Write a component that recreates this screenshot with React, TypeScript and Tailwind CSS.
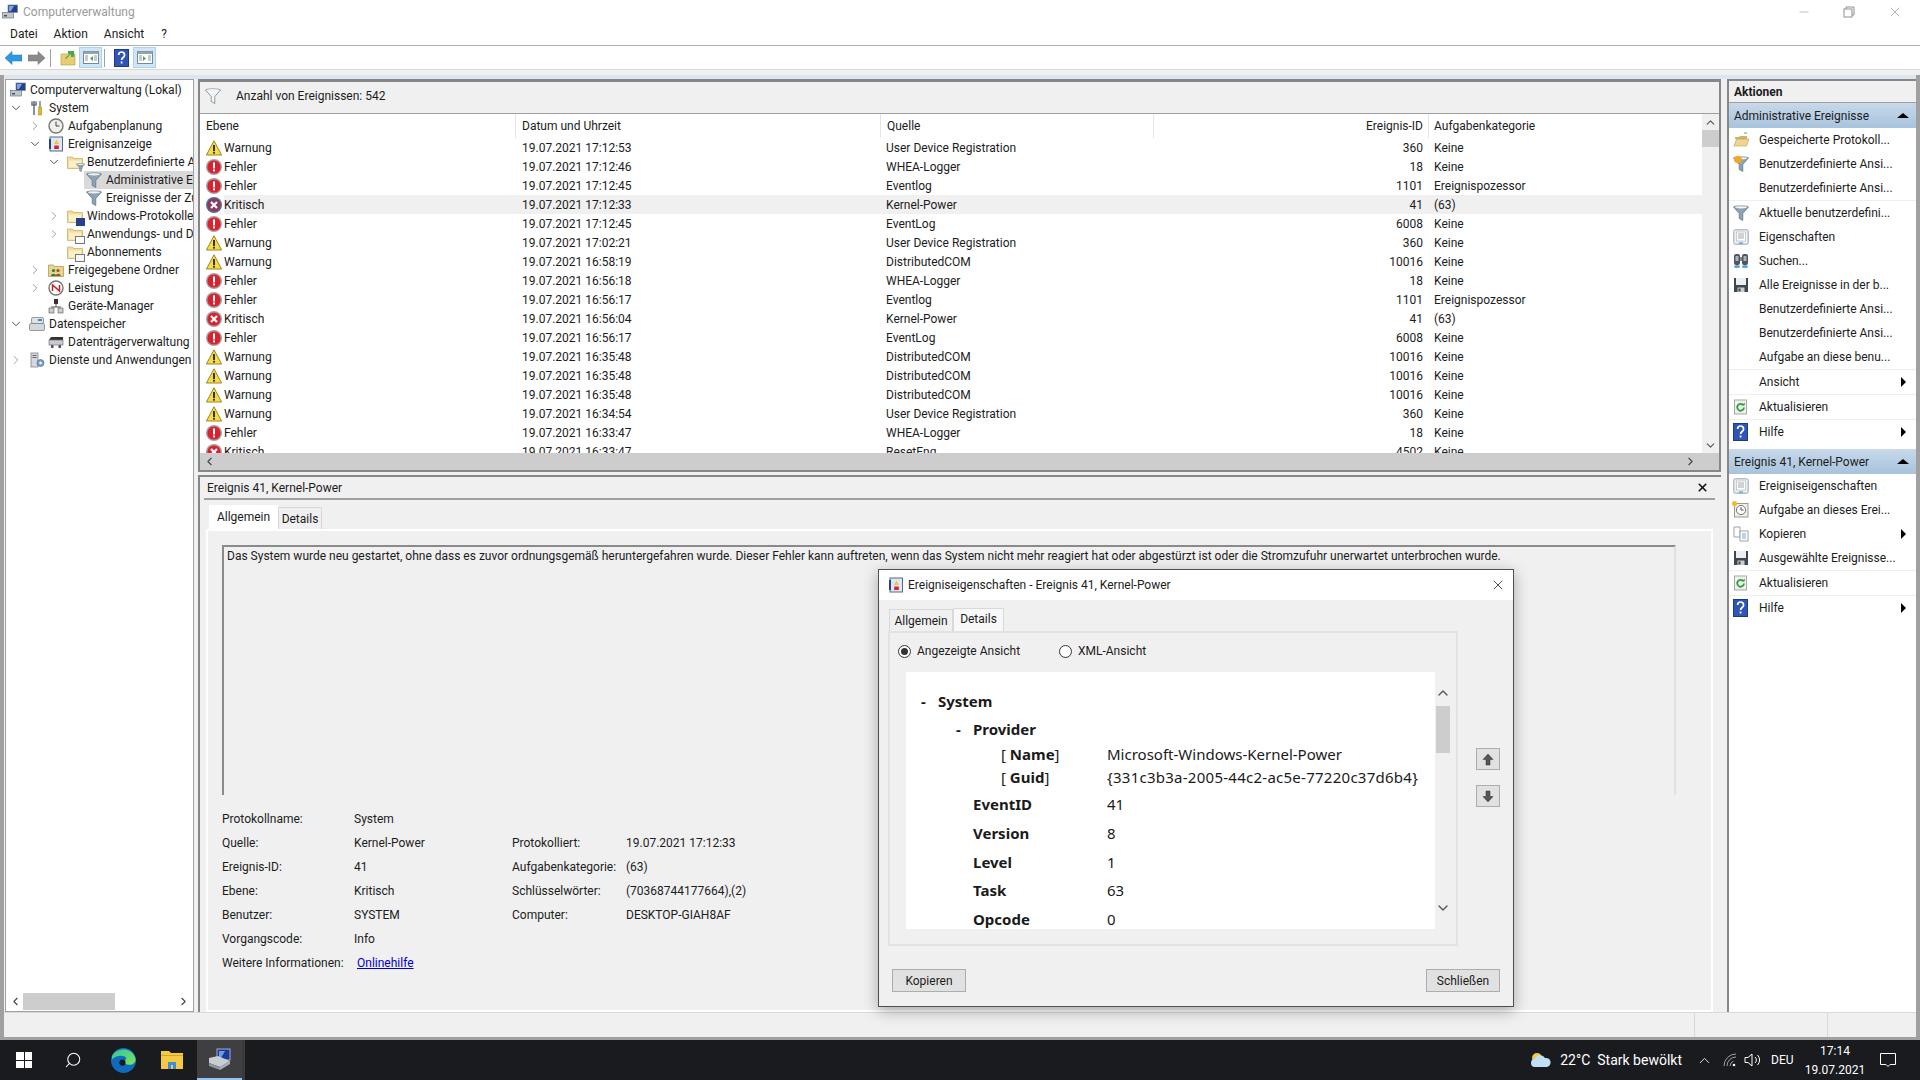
import { ChevronDown, ChevronRight, ChevronUp, ChevronLeft, X, Minus, Search } from "lucide-react";
import type { ReactNode } from "react";

type Level = "Warnung" | "Fehler" | "Kritisch";

const rows: { level: Level; time: string; source: string; id: string; cat: string; hl?: boolean }[] = [
  { level: "Warnung", time: "17:12:53", source: "User Device Registration", id: "360", cat: "Keine" },
  { level: "Fehler", time: "17:12:46", source: "WHEA-Logger", id: "18", cat: "Keine" },
  { level: "Fehler", time: "17:12:45", source: "Eventlog", id: "1101", cat: "Ereignispozessor" },
  { level: "Kritisch", time: "17:12:33", source: "Kernel-Power", id: "41", cat: "(63)", hl: true },
  { level: "Fehler", time: "17:12:45", source: "EventLog", id: "6008", cat: "Keine" },
  { level: "Warnung", time: "17:02:21", source: "User Device Registration", id: "360", cat: "Keine" },
  { level: "Warnung", time: "16:58:19", source: "DistributedCOM", id: "10016", cat: "Keine" },
  { level: "Fehler", time: "16:56:18", source: "WHEA-Logger", id: "18", cat: "Keine" },
  { level: "Fehler", time: "16:56:17", source: "Eventlog", id: "1101", cat: "Ereignispozessor" },
  { level: "Kritisch", time: "16:56:04", source: "Kernel-Power", id: "41", cat: "(63)" },
  { level: "Fehler", time: "16:56:17", source: "EventLog", id: "6008", cat: "Keine" },
  { level: "Warnung", time: "16:35:48", source: "DistributedCOM", id: "10016", cat: "Keine" },
  { level: "Warnung", time: "16:35:48", source: "DistributedCOM", id: "10016", cat: "Keine" },
  { level: "Warnung", time: "16:35:48", source: "DistributedCOM", id: "10016", cat: "Keine" },
  { level: "Warnung", time: "16:34:54", source: "User Device Registration", id: "360", cat: "Keine" },
  { level: "Fehler", time: "16:33:47", source: "WHEA-Logger", id: "18", cat: "Keine" },
  { level: "Kritisch", time: "16:33:47", source: "ResetEng", id: "4502", cat: "Keine" },
];

const Warn = () => (
  <svg width="16" height="16" viewBox="0 0 16 16">
    <path d="M8 .8 15.600 15H.4Z" fill="#f7dc45" stroke="#8f7d18" strokeWidth=".9" />
    <rect x="7.100" y="5" width="1.800" height="6" fill="#222" />
    <rect x="7.100" y="11.800" width="1.800" height="1.800" fill="#222" />
  </svg>
);

const ErrorDot = () => (
  <svg width="16" height="16" viewBox="0 0 16 16">
    <circle cx="8" cy="8" r="8" fill="#a5a0a4" />
    <circle cx="8" cy="8" r="6.600" fill="#d8232e" />
    <rect x="7" y="3.400" width="2" height="6" fill="#fff" />
    <rect x="7" y="10.400" width="2" height="2" fill="#fff" />
  </svg>
);

const Critical = ({ selected }: { selected?: boolean }) => (
  <svg width="16" height="16" viewBox="0 0 16 16">
    <circle cx="8" cy="8" r="8" fill={selected ? "#5a6a9a" : "#a5a0a4"} />
    <circle cx="8" cy="8" r="6.600" fill={selected ? "#8a3a5c" : "#d8232e"} />
    <path d="M5 5l6 6M11 5l-6 6" stroke="#fff" strokeWidth="2.200" />
  </svg>
);

const Funnel = ({ color = "#8aa4b5", size = 16 }: { color?: string; size?: number }) => (
  <svg width={size} height={size} viewBox="0 0 16 16">
    <path d="M.5 2C.5.6 15.500.6 15.500 2L9.800 8.500V15.500L6.200 13.500V8.500Z" fill={color} stroke="#5b7383" strokeWidth=".7" />
    <ellipse cx="8" cy="2.300" rx="6" ry="1.100" fill="#f2f5f7" />
  </svg>
);

const FolderIcon = ({ badge }: { badge?: ReactNode }) => (
  <span className="relative inline-flex h-4 w-4">
    <svg width="16" height="16" viewBox="0 0 16 16">
      <path d="M.5 3h5l1 1.500h9v10H.5Z" fill="#f3dc9b" stroke="#c9a95a" strokeWidth=".7" />
      <path d="M2 6.500h12v7H2Z" fill="#fbf0c8" />
    </svg>
    {badge && <span className="absolute -bottom-[2px] -right-[2px]">{badge}</span>}
  </span>
);

const ComputerIcon = () => (
  <svg width="16" height="16" viewBox="0 0 16 16">
    <rect x="6" y="1" width="9.500" height="7.500" fill="#24408f" stroke="#7d8a99" strokeWidth=".7" />
    <path d="M7 2h5l-3 5H7Z" fill="#7ea4dd" />
    <rect x=".5" y="8.500" width="11" height="5.500" fill="#bfc5cc" stroke="#6f7880" strokeWidth=".7" />
    <rect x="2" y="11" width="3" height="1.500" fill="#4a5058" />
  </svg>
);

const ToolsIcon = () => (
  <svg width="16" height="16" viewBox="0 0 16 16">
    <path d="M5 1v4M3 1.500v3.500h4V1.500M5 5v10" stroke="#6b7680" strokeWidth="1.600" fill="none" />
    <path d="M11 1v6" stroke="#8a8f96" strokeWidth="1.600" />
    <rect x="9.700" y="7" width="2.800" height="8" fill="#e8b422" stroke="#a67c12" strokeWidth=".5" />
  </svg>
);

const ClockIcon = () => (
  <svg width="16" height="16" viewBox="0 0 16 16">
    <circle cx="8" cy="8" r="7" fill="#eef0ee" stroke="#77776f" strokeWidth="1.400" />
    <path d="M8 3.500V8h3.500" stroke="#444" strokeWidth="1" fill="none" />
  </svg>
);

const LogIcon = () => (
  <svg width="16" height="16" viewBox="0 0 16 16">
    <rect x="2" y="1" width="12.500" height="14" fill="#dfe6f0" stroke="#4e6a91" strokeWidth="1" />
    <path d="M2 3v10" stroke="#24408f" strokeWidth="2" />
    <path d="M8.500 3.500 11 8H6Z" fill="#f0c33c" />
    <rect x="6.200" y="9.500" width="4.600" height="3.500" fill="#d8232e" />
  </svg>
);

const SharedIcon = () => (
  <svg width="16" height="16" viewBox="0 0 16 16">
    <path d="M.5 3h5l1 1.500h9v10H.5Z" fill="#e9d490" stroke="#a88f4a" strokeWidth=".7" />
    <circle cx="5.500" cy="8.500" r="1.600" fill="#2f7d4a" />
    <path d="M3 14c0-3 5-3 5 0Z" fill="#2f7d4a" />
    <circle cx="10" cy="8.500" r="1.600" fill="#9a5a20" />
    <path d="M7.800 14c0-3 5-3 5 0Z" fill="#9a5a20" />
  </svg>
);

const PerfIcon = () => (
  <svg width="16" height="16" viewBox="0 0 16 16">
    <circle cx="8" cy="8" r="7" fill="#fff" stroke="#77776f" strokeWidth="1.400" />
    <path d="M4.500 11V5l7 6V5" stroke="#c8202a" strokeWidth="1.500" fill="none" />
  </svg>
);

const DeviceIcon = () => (
  <svg width="16" height="16" viewBox="0 0 16 16">
    <rect x="6" y="1" width="4" height="5" fill="#333" />
    <path d="M8 6v3M3 9h10" stroke="#555" />
    <rect x="1" y="10" width="5" height="5" fill="#c9ccd0" stroke="#555" strokeWidth=".6" />
    <rect x="10" y="10" width="5" height="5" fill="#c9ccd0" stroke="#555" strokeWidth=".6" />
  </svg>
);

const StorageIcon = () => (
  <svg width="16" height="16" viewBox="0 0 16 16">
    <rect x=".5" y="7.500" width="15" height="7" rx="1.500" fill="#d4d8dc" stroke="#6f7880" strokeWidth=".7" />
    <rect x="2.500" y="1.500" width="12" height="6" rx="1.500" fill="#dfe3e6" stroke="#6f7880" strokeWidth=".7" />
    <rect x="9" y="3" width="4" height="2" fill="#2b8fc7" />
  </svg>
);

const DiskIcon = () => (
  <svg width="16" height="16" viewBox="0 0 16 16">
    <path d="M3 3h12v3H1Z" fill="#333" />
    <rect x="1" y="6" width="14" height="5" fill="#c7cbd0" stroke="#666" strokeWidth=".6" />
    <rect x="3" y="11" width="2.500" height="3" fill="#555" />
    <rect x="10.500" y="11" width="2.500" height="3" fill="#555" />
  </svg>
);

const ServiceIcon = () => (
  <svg width="16" height="16" viewBox="0 0 16 16">
    <rect x="2" y="1" width="7" height="14" fill="#d5d9de" stroke="#6f7880" strokeWidth=".7" />
    <path d="M3.500 3.500h4M3.500 5.500h4" stroke="#666" />
    <circle cx="11.500" cy="11" r="3.400" fill="#7fa6cf" stroke="#4a6f96" strokeWidth=".8" />
    <circle cx="11.500" cy="11" r="1.200" fill="#fff" />
  </svg>
);

const tree: { label: string; depth: number; arrow?: "open" | "closed"; icon: ReactNode; sel?: boolean }[] = [
  { label: "Computerverwaltung (Lokal)", depth: 0, icon: <ComputerIcon /> },
  { label: "System", depth: 1, arrow: "open", icon: <ToolsIcon /> },
  { label: "Aufgabenplanung", depth: 2, arrow: "closed", icon: <ClockIcon /> },
  { label: "Ereignisanzeige", depth: 2, arrow: "open", icon: <LogIcon /> },
  { label: "Benutzerdefinierte Ansichten", depth: 3, arrow: "open", icon: <FolderIcon badge={<Funnel size={9} />} /> },
  { label: "Administrative Ereignisse", depth: 4, icon: <Funnel />, sel: true },
  { label: "Ereignisse der Zusammenfassung", depth: 4, icon: <Funnel /> },
  { label: "Windows-Protokolle", depth: 3, arrow: "closed", icon: <FolderIcon badge={<span className="block h-[8px] w-[9px] bg-[#24408f]" />} /> },
  { label: "Anwendungs- und Dienstprotokolle", depth: 3, arrow: "closed", icon: <FolderIcon badge={<span className="block h-[8px] w-[10px] border border-[#777] bg-white" />} /> },
  { label: "Abonnements", depth: 3, icon: <FolderIcon badge={<span className="block h-[8px] w-[10px] border border-[#777] bg-[#f4f6fa]" />} /> },
  { label: "Freigegebene Ordner", depth: 2, arrow: "closed", icon: <SharedIcon /> },
  { label: "Leistung", depth: 2, arrow: "closed", icon: <PerfIcon /> },
  { label: "Geräte-Manager", depth: 2, icon: <DeviceIcon /> },
  { label: "Datenspeicher", depth: 1, arrow: "open", icon: <StorageIcon /> },
  { label: "Datenträgerverwaltung", depth: 2, icon: <DiskIcon /> },
  { label: "Dienste und Anwendungen", depth: 1, arrow: "closed", icon: <ServiceIcon /> },
];

const HelpIcon = () => (
  <svg width="15" height="18" viewBox="0 0 15 18">
    <rect x=".5" y=".5" width="14" height="17" fill="#2f55b5" stroke="#1c3a86" />
    <path d="M4.600 6c0-4 6-4 6 0 0 2.600-3 2.400-3 5M7.600 12.600v2" stroke="#fff" strokeWidth="1.700" fill="none" />
  </svg>
);

const RefreshIcon = () => (
  <svg width="16" height="16" viewBox="0 0 16 16">
    <rect x="1.500" y="1" width="12" height="14" fill="#eef2ea" stroke="#a4a9a2" />
    <path d="M11 8.500a3.400 3.400 0 1 1-1-2.600" stroke="#2f9c3f" strokeWidth="1.800" fill="none" />
    <path d="M8.500 6.600h3.200V3.600Z" fill="#2f9c3f" />
  </svg>
);

const PropsIcon = () => (
  <svg width="16" height="16" viewBox="0 0 16 16">
    <rect x=".8" y=".8" width="14.400" height="14.400" rx="1.500" fill="#eef1f4" stroke="#9aa3ad" />
    <rect x="3.500" y="3" width="9" height="9" fill="#fff" stroke="#aab2ba" strokeWidth=".6" />
    <path d="M5 5h6M5 7h6M5 9h6" stroke="#8a929b" strokeWidth=".8" />
    <rect x="6" y="13.400" width="4" height="1.400" fill="#57a5dd" />
  </svg>
);

const Floppy = () => (
  <svg width="16" height="16" viewBox="0 0 16 16">
    <path d="M1 1h14v14H1Z" fill="#40464d" />
    <rect x="3" y="1" width="10" height="7" fill="#eceff2" />
    <rect x="4.500" y="10.500" width="7" height="4.500" fill="#c9cdd1" />
    <rect x="5.500" y="11.500" width="2" height="3" fill="#40464d" />
  </svg>
);

const Binoculars = () => (
  <svg width="16" height="16" viewBox="0 0 16 16">
    <rect x="1" y="1" width="6" height="11" rx="2" fill="#4e5761" />
    <rect x="9" y="1" width="6" height="11" rx="2" fill="#4e5761" />
    <rect x="2.500" y="3" width="3" height="5" fill="#aab2ba" />
    <rect x="10.500" y="3" width="3" height="5" fill="#aab2ba" />
    <rect x="7" y="4" width="2" height="4" fill="#7d8792" />
    <ellipse cx="4" cy="13.500" rx="3" ry="1.600" fill="#5aa3dc" />
    <ellipse cx="12" cy="13.500" rx="3" ry="1.600" fill="#5aa3dc" />
  </svg>
);

const OpenFolder = () => (
  <svg width="16" height="16" viewBox="0 0 16 16">
    <path d="M2 5h4l1-1h7v3H2Z" fill="#d2b36b" />
    <path d="M3.500 7H16l-2.500 7H1Z" fill="#eed594" stroke="#b99c56" strokeWidth=".6" />
    <path d="M11 1h3" stroke="#5cae5c" />
  </svg>
);

const FunnelOrange = () => (
  <span className="relative inline-flex h-4 w-4">
    <Funnel />
    <span className="absolute left-[1px] top-0 h-[7px] w-[8px] rounded-full bg-[#f5a623]" />
  </span>
);

const TaskClock = () => (
  <span className="relative inline-flex h-4 w-4">
    <svg width="16" height="16" viewBox="0 0 16 16">
      <rect x="1.500" y="1.500" width="13.500" height="13.500" fill="#f0efe8" stroke="#9a9a92" />
      <circle cx="8" cy="8" r="4.600" fill="#fff" stroke="#777" />
      <path d="M8 5v3h2.600" stroke="#555" fill="none" />
    </svg>
    <span className="absolute -left-[1px] -top-[1px] h-[5px] w-[5px] rounded-full bg-[#f5b921]" />
  </span>
);

const CopyIcon = () => (
  <svg width="16" height="16" viewBox="0 0 16 16">
    <path d="M1 1h6v10H1Z" fill="#fff" stroke="#9aa3ad" />
    <path d="M7 5h8v10H7Z" fill="#fff" stroke="#9aa3ad" />
    <path d="M9 8h4M9 10h4M9 12h4" stroke="#7fa6cf" />
  </svg>
);

type Action = { label: string; icon?: ReactNode; more?: boolean; sep?: boolean };

const actionsTop: Action[] = [
  { label: "Gespeicherte Protokoll...", icon: <OpenFolder /> },
  { label: "Benutzerdefinierte Ansi...", icon: <FunnelOrange /> },
  { label: "Benutzerdefinierte Ansi...", sep: true },
  { label: "Aktuelle benutzerdefini...", icon: <Funnel /> },
  { label: "Eigenschaften", icon: <PropsIcon /> },
  { label: "Suchen...", icon: <Binoculars /> },
  { label: "Alle Ereignisse in der b...", icon: <Floppy /> },
  { label: "Benutzerdefinierte Ansi..." },
  { label: "Benutzerdefinierte Ansi..." },
  { label: "Aufgabe an diese benu...", sep: true },
  { label: "Ansicht", more: true, sep: true },
  { label: "Aktualisieren", icon: <RefreshIcon />, sep: true },
  { label: "Hilfe", icon: <HelpIcon />, more: true },
];

const actionsBottom: Action[] = [
  { label: "Ereigniseigenschaften", icon: <PropsIcon /> },
  { label: "Aufgabe an dieses Erei...", icon: <TaskClock /> },
  { label: "Kopieren", icon: <CopyIcon />, more: true },
  { label: "Ausgewählte Ereignisse...", icon: <Floppy />, sep: true },
  { label: "Aktualisieren", icon: <RefreshIcon />, sep: true },
  { label: "Hilfe", icon: <HelpIcon />, more: true },
];

const ActionRow = ({ item }: { item: Action }) => (
  <div className={`flex shrink-0 items-center pl-[4px] pr-[10px] ${item.sep ? "h-[25px] border-b border-[#eeeeee]" : "h-[24px]"}`}>
    <span className="flex w-[26px] shrink-0 items-center">{item.icon}</span>
    <span className="flex-1 whitespace-nowrap">{item.label}</span>
    {item.more && <span className="h-0 w-0 border-y-[5px] border-l-[5px] border-y-transparent border-l-black" />}
  </div>
);

const ActionHeader = ({ label }: { label: string }) => (
  <div className="flex h-[25px] shrink-0 items-center justify-between bg-gradient-to-b from-[#c7d9ea] to-[#a8c3dd] pl-[5px] pr-[7px]">
    <span>{label}</span>
    <span className="h-0 w-0 border-x-[6px] border-b-[5px] border-x-transparent border-b-black" />
  </div>
);

const details = [
  ["Protokollname:", "System", "", ""],
  ["Quelle:", "Kernel-Power", "Protokolliert:", "19.07.2021 17:12:33"],
  ["Ereignis-ID:", "41", "Aufgabenkategorie:", "(63)"],
  ["Ebene:", "Kritisch", "Schlüsselwörter:", "(70368744177664),(2)"],
  ["Benutzer:", "SYSTEM", "Computer:", "DESKTOP-GIAH8AF"],
  ["Vorgangscode:", "Info", "", ""],
];

const xmlRows = [
  ["EventID", "41"],
  ["Version", "8"],
  ["Level", "1"],
  ["Task", "63"],
  ["Opcode", "0"],
];

const ArrowButton = ({ dir }: { dir: "up" | "down" }) => (
  <div className="flex h-[22px] w-[24px] items-center justify-center border border-[#adadad] bg-[#e1e1e1]">
    <svg width="12" height="13" viewBox="0 0 12 13">
      <path d={dir === "up" ? "M6 1 11 6.500H8V12H4V6.500H1Z" : "M6 12 11 6.500H8V1H4V6.500H1Z"} fill="#555" stroke="#333" strokeWidth=".5" />
    </svg>
  </div>
);

const DlgButton = ({ label }: { label: string }) => (
  <div className="flex h-[23px] w-[74px] items-center justify-center border border-[#adadad] bg-[#e1e1e1]">{label}</div>
);

const Dialog = () => (
  <div className="absolute left-[878px] top-[569px] flex h-[438px] w-[636px] flex-col border border-[#4f4f4f] bg-[#f0f0f0] shadow-[0_4px_14px_rgba(0,0,0,0.3)]">
    <div className="flex h-[30px] shrink-0 items-center bg-white pl-[9px] pr-[7px]">
      <LogIcon />
      <span className="ml-[4px] flex-1">Ereigniseigenschaften - Ereignis 41, Kernel-Power</span>
      <X size={16} strokeWidth={1.2} color="#222" />
    </div>
    <div className="flex flex-1 flex-col px-[9px] pt-[8px]">
      <div className="flex h-[23px] items-end pl-[1px]">
        <div className="flex h-[22px] w-[64px] items-center justify-center border border-b-0 border-[#d9d9d9] bg-[#f0f0f0]">Allgemein</div>
        <div className="-mb-[1px] flex h-[24px] w-[51px] items-start justify-center border border-b-0 border-[#d9d9d9] bg-[#f8f8f8] pt-[4px]">Details</div>
      </div>
      <div className="flex h-[315px] w-[570px] flex-col border-2 border-[#e2e2e2] bg-[#f0f0f0] px-[16px]">
        <div className="-ml-[8px] mb-[3px] flex h-[36px] shrink-0 items-center">
          <span className="flex h-[13px] w-[13px] shrink-0 items-center justify-center rounded-full border border-[#333] bg-white">
            <span className="h-[7px] w-[7px] rounded-full bg-[#333]" />
          </span>
          <span className="w-[148px] shrink-0 indent-[6px]">Angezeigte Ansicht</span>
          <span className="h-[13px] w-[13px] shrink-0 rounded-full border border-[#333] bg-white" />
          <span className="ml-[6px]">XML-Ansicht</span>
        </div>
        <div className="flex h-[257px] shrink-0">
          <div className="h-full w-[529px] shrink-0 overflow-hidden whitespace-nowrap bg-white pt-[15px] font-['Noto_Sans',sans-serif] text-[15px] leading-[26px] text-[#1a1a1a]">
            <div className="flex h-[28px] items-center pl-[15px] font-bold">
              <span className="w-[17px]">-</span>System
            </div>
            <div className="flex h-[27px] items-center pl-[50px] font-bold">
              <span className="w-[17px]">-</span>Provider
            </div>
            <div className="flex h-[24px] items-center pl-[95px]">
              <span className="w-[106px]">[ <b>Name</b>]</span>Microsoft-Windows-Kernel-Power
            </div>
            <div className="flex h-[22px] items-center pl-[95px]">
              <span className="w-[106px]">[ <b>Guid</b>]</span>
              <span className="tracking-[0.26px]">{"{331c3b3a-2005-44c2-ac5e-77220c37d6b4}"}</span>
            </div>
            <div className="mt-[2px]">
              {xmlRows.map(([k, v]) => (
                <div key={k} className="flex h-[28.7px] items-center pl-[67px]">
                  <b className="w-[134px]">{k}</b>{v}
                </div>
              ))}
            </div>
          </div>
          <div className="flex w-[16px] shrink-0 flex-col items-center pt-[13px]">
            <ChevronUp size={16} strokeWidth={2} color="#555" />
            <div className="mt-[5px] h-[47px] w-[14px] bg-[#cdcdcd]" />
            <div className="mt-auto mb-[13px]">
              <ChevronDown size={16} strokeWidth={2} color="#555" />
            </div>
          </div>
          <div className="ml-[25px] flex shrink-0 flex-col gap-[15px] pt-[76px]">
            <ArrowButton dir="up" />
            <ArrowButton dir="down" />
          </div>
        </div>
      </div>
      <div className="mt-[23px] flex w-[612px] justify-between pl-[4px]">
        <DlgButton label="Kopieren" />
        <DlgButton label="Schließen" />
      </div>
    </div>
  </div>
);

const PaneIcon = ({ left }: { left?: boolean }) => (
  <svg width="16" height="13" viewBox="0 0 16 13">
    <rect x=".5" y=".5" width="15" height="12" fill="#fff" stroke="#7a8794" />
    <rect x=".5" y=".5" width="15" height="2.500" fill="#97a4b0" />
    <path d={left ? "M10 5v5L7 7.500Z" : "M6 5v5l3-2.500Z"} fill="#4aa84a" />
    <path d="M2 5h3M2 7h3M2 9h3M11 5h3M11 7h3M11 9h3" stroke="#8a97a3" />
  </svg>
);

const Toolbar = () => (
  <div className="flex h-[24px] items-center border-b border-[#d9d9d9] bg-white pl-[5px]">
    <svg width="17" height="14" viewBox="0 0 17 14">
      <path d="M0 7 7 .5V4h10v6H7v3.500Z" fill="#2f9ae0" stroke="#1d6fb0" strokeWidth=".5" />
    </svg>
    <svg className="ml-[6px]" width="17" height="14" viewBox="0 0 17 14">
      <path d="M17 7 10 .5V4H0v6h10v3.500Z" fill="#8a8a8a" stroke="#6d6d6d" strokeWidth=".5" />
    </svg>
    <span className="ml-[5px] h-[18px] w-px bg-[#a0a0a0]" />
    <svg className="ml-[9px]" width="16" height="16" viewBox="0 0 16 16">
      <path d="M1 4h14v11H1Z" fill="#e9cd72" stroke="#b49a45" strokeWidth=".6" />
      <path d="M6 9 11 4V7h3V1h-6v3l2 0-5 4Z" fill="#4aa84a" />
    </svg>
    <span className="ml-[3px] flex h-[21px] w-[23px] items-center justify-center border border-[#a9d3f0] bg-[#cfe6f6]">
      <PaneIcon left />
    </span>
    <span className="ml-[2px] h-[18px] w-px bg-[#a0a0a0]" />
    <span className="ml-[9px] flex">
      <HelpIcon />
    </span>
    <span className="ml-[4px] flex h-[21px] w-[23px] items-center justify-center border border-[#a9d3f0] bg-[#cfe6f6]">
      <PaneIcon />
    </span>
  </div>
);

export default function App() {
  return (
    <div className="relative flex h-[1080px] w-[1920px] flex-col overflow-hidden bg-white font-['Roboto',sans-serif] text-[12px] leading-none text-[#1c1c1c]">
      {/* Title bar */}
      <div className="flex h-[22px] items-center pl-[2px] pt-[2px]">
        <ComputerIcon />
        <span className="ml-[5px] text-[#9a9a9a]">Computerverwaltung</span>
        <div className="ml-auto flex items-center gap-[32px] pr-[17px] text-[#8f8f8f]">
          <Minus size={14} strokeWidth={1} />
          <svg width="12" height="12" viewBox="0 0 12 12" fill="none" stroke="#8f8f8f">
            <rect x="1" y="3" width="8" height="8" />
            <path d="M3 3V1h8v8H9" />
          </svg>
          <X size={16} strokeWidth={1} />
        </div>
      </div>
      {/* Menu */}
      <div className="flex h-[24px] items-center gap-[16px] border-b border-[#b0b0b0] pl-[10px]">
        <span>Datei</span>
        <span>Aktion</span>
        <span>Ansicht</span>
        <span className="ml-[1px]">?</span>
      </div>
      <Toolbar />

      {/* Main */}
      <div className="flex flex-1 flex-col bg-[#f0f0f0]">
        <div className="h-[5px]" />
        <div className="flex flex-1 flex-col border-x-4 border-[#a0a0a0]">
          <div className="h-[4px] bg-[#dbe6f1]" />
          <div className="flex h-[933px]">
            {/* Tree */}
            <div className="ml-[1px] flex w-[189px] flex-col border border-[#a0a0a0] bg-white">
              <div className="flex-1 overflow-hidden pt-[1px]">
                {tree.map((t) => (
                  <div key={t.label} className="flex h-[18px] items-center whitespace-nowrap" style={{ paddingLeft: 4 + t.depth * 19 }}>
                    <span className="flex w-0 items-center">
                      {t.arrow === "open" && <ChevronDown className="-ml-[20px] shrink-0" size={14} strokeWidth={1.6} color="#444" />}
                      {t.arrow === "closed" && <ChevronRight className="-ml-[20px] shrink-0" size={14} strokeWidth={1.6} color="#999" />}
                    </span>
                    <span className={`flex h-[18px] items-center ${t.sel ? "-ml-[2px] flex-1 bg-[#d9d9d9] pl-[2px]" : ""}`}>
                      <span className="flex w-[20px] shrink-0 items-center">{t.icon}</span>
                      <span>{t.label}</span>
                    </span>
                  </div>
                ))}
              </div>
              <div className="mb-[1px] flex h-[18px] items-center justify-between px-[3px]">
                <ChevronLeft size={13} strokeWidth={2} color="#444" />
                <div className="ml-[1px] mr-auto h-[17px] w-[92px] bg-[#cdcdcd]" />
                <ChevronRight size={13} strokeWidth={2} color="#444" />
              </div>
            </div>

            {/* Center */}
            <div className="ml-[4px] flex w-[1523px] flex-col">
              {/* Event list */}
              <div className="flex h-[393px] flex-col border-2 border-t-[3px] border-[#878787] bg-white">
                <div className="flex h-[32px] shrink-0 items-center border-b border-[#a0a0a0] bg-[#f0f0f0] pb-[3px] pl-[5px]">
                  <Funnel color="#f4f6f7" />
                  <span className="ml-[15px]">Anzahl von Ereignissen: 542</span>
                </div>
                <div className="flex min-h-0 flex-1">
                  <div className="flex min-w-0 flex-1 flex-col">
                    <div className="grid h-[24px] shrink-0 grid-cols-[309px_365px_273px_275px_1fr] items-center pl-[6px]">
                      <span>Ebene</span>
                      <span className="flex h-full items-center border-l border-[#e5e5e5] pl-[6px]">Datum und Uhrzeit</span>
                      <span className="flex h-full items-center border-l border-[#e5e5e5] pl-[6px]">Quelle</span>
                      <span className="flex h-full items-center justify-end border-l border-[#e5e5e5] pr-[5px]">Ereignis-ID</span>
                      <span className="flex h-full items-center border-l border-[#e5e5e5] pl-[5px]">Aufgabenkategorie</span>
                    </div>
                    <div className="min-h-0 flex-1 overflow-hidden">
                      {rows.map((r, i) => (
                        <div key={i} className="flex h-[19px] items-center">
                          <span className="flex w-[24px] shrink-0 justify-end pr-[2px]">
                            {r.level === "Warnung" ? <Warn /> : r.level === "Fehler" ? <ErrorDot /> : <Critical selected={r.hl} />}
                          </span>
                          <div className={`grid h-[19px] flex-1 grid-cols-[298px_364px_444px_93px_1fr] items-center ${r.hl ? "bg-[#f0f0f0]" : ""}`}>
                            <span>{r.level}</span>
                            <span>19.07.2021 {r.time}</span>
                            <span>{r.source}</span>
                            <span className="text-right">{r.id}</span>
                            <span className="pl-[11px]">{r.cat}</span>
                          </div>
                        </div>
                      ))}
                    </div>
                  </div>
                  <div className="flex w-[17px] shrink-0 flex-col items-center bg-[#f0f0f0] pt-[2px]">
                    <ChevronUp size={13} strokeWidth={2} color="#555" />
                    <div className="mt-[1px] h-[17px] w-full bg-[#cdcdcd]" />
                    <div className="mt-auto mb-[1px]">
                      <ChevronDown size={13} strokeWidth={2} color="#555" />
                    </div>
                  </div>
                </div>
                <div className="flex h-[17px] shrink-0 items-center justify-between bg-[#cdcdcd] pl-[3px] pr-[22px]">
                  <ChevronLeft size={13} strokeWidth={2} color="#444" />
                  <ChevronRight size={13} strokeWidth={2} color="#444" />
                </div>
              </div>

              {/* Event details */}
              <div className="mt-[3px] flex h-[537px] flex-col border-l-2 border-t-2 border-[#878787] bg-[#f0f0f0] pl-[4px] pr-[6px]">
                <div className="flex h-[23px] shrink-0 items-center border-b-2 border-[#a0a0a0] pl-[3px] pr-[6px]">
                  <span className="flex-1">Ereignis 41, Kernel-Power</span>
                  <X size={13} strokeWidth={3} color="#111" />
                </div>
                <div className="ml-[5px] mt-[6px] flex h-[23px] shrink-0 items-end">
                  <div className="flex h-[24px] w-[69px] items-center justify-center bg-white">Allgemein</div>
                  <div className="flex h-[22px] w-[44px] items-center justify-center border border-b-0 border-[#d9d9d9]">Details</div>
                </div>
                <div className="mx-[2px] flex flex-1 flex-col border-2 border-white pl-[14px]">
                  <div className="mt-[14px] h-[250px] w-[1454px] shrink-0 border-2 border-b-0 border-[#8a8a8a] border-r-[#e0e0e0] pl-[3px] pt-[3px]">
                    Das System wurde neu gestartet, ohne dass es zuvor ordnungsgemäß heruntergefahren wurde. Dieser Fehler kann auftreten, wenn das System nicht mehr reagiert hat oder abgestürzt ist oder die Stromzufuhr unerwartet unterbrochen wurde.
                  </div>
                  <div className="mt-[12px] flex flex-col">
                    {details.map(([a, b, c, d]) => (
                      <div key={a} className="grid h-[24px] grid-cols-[132px_158px_114px_1fr] items-center">
                        <span>{a}</span>
                        <span>{b}</span>
                        <span>{c}</span>
                        <span>{d}</span>
                      </div>
                    ))}
                    <div className="flex h-[24px] items-center">
                      <span className="w-[135px]">Weitere Informationen:</span>
                      <span className="text-[#0000cc] underline">Onlinehilfe</span>
                    </div>
                  </div>
                </div>
              </div>
            </div>

            {/* Actions */}
            <div className="ml-[6px] flex w-[189px] flex-col border-2 border-b-0 border-r-0 border-[#878787] bg-white">
              <div className="flex h-[22px] shrink-0 items-center border-b border-[#a0a0a0] bg-[#f0f0f0] pl-[5px] font-bold">Aktionen</div>
              <ActionHeader label="Administrative Ereignisse" />
              {actionsTop.map((a, i) => (
                <ActionRow key={i} item={a} />
              ))}
              <div className="h-[5px] shrink-0" />
              <ActionHeader label="Ereignis 41, Kernel-Power" />
              {actionsBottom.map((a, i) => (
                <ActionRow key={i} item={a} />
              ))}
            </div>
          </div>
          {/* Status bar */}
          <div className="flex h-[25px] border-t border-[#d9d9d9]">
            <div className="w-[1691px] border-r border-[#d9d9d9]" />
            <div className="w-[133px] border-r border-[#d9d9d9]" />
          </div>
        </div>
        <div className="h-[3px] bg-[#a0a0a0]" />
      </div>

      {/* Taskbar */}
      <div className="flex h-[40px] shrink-0 items-center bg-[#1a1b1f] text-white">
        <div className="ml-[16px] grid h-[16px] w-[16px] grid-cols-2 gap-[1px]">
          <span className="bg-white" />
          <span className="bg-white" />
          <span className="bg-white" />
          <span className="bg-white" />
        </div>
        <Search className="ml-[32px] -scale-x-100" size={18} strokeWidth={1.4} color="#fff" />
        <svg className="ml-[29px]" width="25" height="25" viewBox="0 0 24 24">
          <defs>
            <linearGradient id="edge" x1="0" y1="0" x2="1" y2="1">
              <stop offset="0" stopColor="#33c6a0" />
              <stop offset="1" stopColor="#7ee25a" />
            </linearGradient>
          </defs>
          <circle cx="12" cy="12" r="12" fill="#0f6cbd" />
          <path d="M1 8C4 0 20-2 23.500 10c.7 4-3 6.500-6 6-3 0-5-1-5-3 0-1 1-2 2-2 1-3-3-4-6-3.500C5 8 3 9 1 11Z" fill="url(#edge)" />
          <circle cx="11" cy="14" r="3" fill="#1a1b1f" />
        </svg>
        <svg className="ml-[25px]" width="22" height="18" viewBox="0 0 22 18">
          <path d="M0 0h8l2 2h12v16H0Z" fill="#f5c942" />
          <rect y="4" width="22" height="1" fill="#d9a520" />
          <path d="M7 18v-7h8v7h-3v-4h-2v4Z" fill="#3b8fd8" />
        </svg>
        <div className="ml-[14px] flex h-full w-[48px] flex-col border-r-[3px] border-[#3a3a3c] bg-[#3f3f42]">
          <div className="flex flex-1 items-center justify-center">
            <svg width="24" height="24" viewBox="0 0 24 24">
              <rect x="9" y="2" width="13" height="11" fill="#1b3a9a" stroke="#9fb0c4" />
              <path d="M11 4h6l-4 7h-2Z" fill="#6f9be0" />
              <path d="M1 11 10 9l12 5-10 6-11-4Z" fill="#c8cdd2" />
              <path d="M1 16l11 4v3L1 19Z" fill="#8f969c" />
              <path d="M12 20l10-6v3l-10 6Z" fill="#a9afb5" />
            </svg>
          </div>
          <div className="h-[2px] bg-[#90c6f2]" />
        </div>
        <div className="ml-auto flex items-center text-[14px]">
          <svg width="22" height="16" viewBox="0 0 22 16">
            <circle cx="7" cy="6" r="5" fill="#f2c94c" />
            <path d="M5 15a4 4 0 0 1 0-8 5.500 5.500 0 0 1 10-1 4.500 4.500 0 0 1 2 9Z" fill="#bfe0f5" />
          </svg>
          <span className="ml-[8px]">22°C</span>
          <span className="ml-[7px]">Stark bewölkt</span>
          <ChevronUp className="ml-[14px]" size={17} strokeWidth={1.2} />
          <svg className="ml-[10px]" width="14" height="14" viewBox="0 0 14 14" fill="none" stroke="#a0a0a0">
            <path d="M1 13a12 12 0 0 1 12-12M4 13a9 9 0 0 1 9-9M7 13a6 6 0 0 1 3.500-5" />
            <circle cx="11" cy="12" r="1.300" fill="#fff" stroke="none" />
          </svg>
          <svg className="ml-[7px]" width="18" height="16" viewBox="0 0 18 16" fill="none" stroke="#fff">
            <path d="M1 5.500h3L8 2v12l-4-3.500H1ZM11 5a4 4 0 0 1 0 6M13.500 3a7 7 0 0 1 0 10" />
          </svg>
          <span className="ml-[9px] w-[23px] text-[12px]">DEU</span>
          <div className="ml-[14px] flex w-[54px] flex-col items-center gap-[7px] text-[12px]">
            <span>17:14</span>
            <span>19.07.2021</span>
          </div>
          <svg className="ml-[18px] mr-[24px]" width="16" height="16" viewBox="0 0 16 16" fill="none" stroke="#fff">
            <path d="M.5 1.500h15v11H10l-2 2-2-2H.5Z" />
          </svg>
        </div>
      </div>

      <Dialog />
    </div>
  );
}
